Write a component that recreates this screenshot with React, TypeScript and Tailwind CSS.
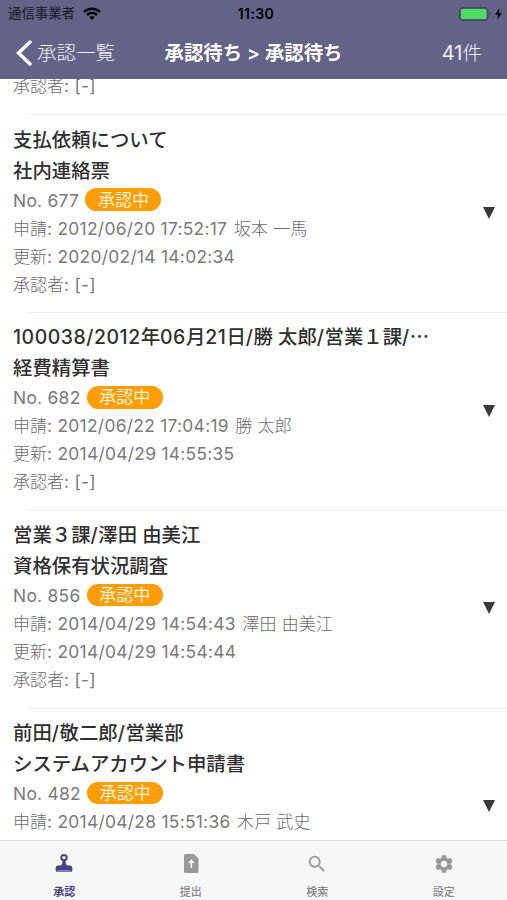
import { MdSearch, MdSettings } from "react-icons/md";

type Item = {
  title: string;
  form: string;
  no: string;
  applied: string;
  applicant: string;
  updated?: string;
};

const items: Item[] = [
  { title: "支払依頼について", form: "社内連絡票", no: "677", applied: "2012/06/20 17:52:17", applicant: "坂本 一馬", updated: "2020/02/14 14:02:34" },
  { title: "100038/2012年06月21日/勝 太郎/営業１課/⋯", form: "経費精算書", no: "682", applied: "2012/06/22 17:04:19", applicant: "勝 太郎", updated: "2014/04/29 14:55:35" },
  { title: "営業３課/澤田 由美江", form: "資格保有状況調査", no: "856", applied: "2014/04/29 14:54:43", applicant: "澤田 由美江", updated: "2014/04/29 14:54:44" },
  { title: "前田/敬二郎/営業部", form: "システムアカウント申請書", no: "482", applied: "2014/04/28 15:51:36", applicant: "木戸 武史" },
];

/* Latin letters and digits are set a little wider than the Japanese text. */
function Title({ text }: { text: string }) {
  return (
    <div className="text-[19.4px] font-medium leading-[31px] text-[#303030]">
      {text.split(/([0-9/]+)/).map((part, i) =>
        i % 2 ? <span key={i} className="tracking-[0.55px]">{part}</span> : part,
      )}
    </div>
  );
}

function Latin({ children }: { children: string }) {
  return <span className="text-[17.4px] font-normal tracking-[0.28px] text-[#7a7a7a]">{children}</span>;
}

function Approver() {
  return <div>承認者<Latin>: [-]</Latin></div>;
}

function Row({ item }: { item: Item }) {
  return (
    <div className="flex items-start pl-[13px] pt-[9.4px]">
      <div className="min-w-0 flex-1 whitespace-nowrap text-[17px] font-light leading-[28px] text-[#6c6c6c]">
        <Title text={item.title} />
        <Title text={item.form} />
        <div className="flex h-[28px] items-center">
          <Latin>{`No. ${item.no}`}</Latin>
          <span className="-mt-[2px] ml-[6.2px] flex h-[22.4px] w-[76px] items-center justify-center rounded-full bg-[#ff9d05] font-normal leading-[22px] text-[#fff3df]">承認中</span>
        </div>
        <div>申請<Latin>{`: ${item.applied} `}</Latin><span className="ml-[1.3px] tracking-[0.2px]">{item.applicant}</span></div>
        {item.updated && <div>更新<Latin>{`: ${item.updated}`}</Latin></div>}
        {item.updated && <Approver />}
      </div>
      <svg className="mr-[12px] mt-[82.3px] h-[12px] w-[12px]" viewBox="0 0 12 12">
        <path d="M0 0h12L6 12z" fill="#3a3a3a" />
      </svg>
    </div>
  );
}

export default function App() {
  return (
    <div className="flex h-[900px] w-[507px] flex-col overflow-hidden bg-white font-[Inter,'Noto_Sans_CJK_JP',sans-serif]">
      <header className="z-10 h-[79px] shrink-0 bg-[#636287]">
        <div className="grid h-[27px] grid-cols-3 items-center pl-[8px] pr-[5px] text-[13.4px] leading-[27px] text-[#17171f]">
          <div className="flex items-center gap-[8px] whitespace-nowrap">
            <span>通信事業者</span>
            <svg className="h-[13px] w-[18px]" viewBox="0 0 18 13" fill="none" stroke="#08080c" strokeWidth="2.5">
              <path d="M1 4.9C5.5.6 12.5.6 17 4.9M4 8c2.9-2.7 7.100-2.7 10 0" />
              <path d="M9 13L6.100 10.100c1.600-1.500 4.200-1.500 5.800 0z" fill="#08080c" stroke="none" />
            </svg>
          </div>
          <div className="pl-[2px] text-center text-[14px] font-semibold tracking-[0.4px] text-black">11:30</div>
          <div className="flex items-center justify-end gap-[4px]">
            <svg className="h-[14px] w-[32px]" viewBox="0 0 32 14">
              <rect x=".75" y=".75" width="28" height="12.500" rx="3" fill="none" stroke="#454563" strokeWidth="1.300" />
              <rect x="2" y="2" width="25.500" height="10" rx="1.500" fill="#4ddc62" />
              <path d="M30.300 4.800c1.500.5 1.500 3.900 0 4.400z" fill="#454563" />
            </svg>
            <svg className="h-[12px] w-[7px]" viewBox="0 0 7 12"><path d="M4.700 0L0 6.800h3L2.200 12 7 5H4z" fill="#09090d" /></svg>
          </div>
        </div>
        <div className="flex h-[52px] items-center whitespace-nowrap pl-[16px] pr-[25px] text-[19.5px] font-light leading-[52px] text-[#f1f0f7]">
          <svg className="h-[26px] w-[16px]" viewBox="0 0 16 26" fill="none" stroke="white" strokeWidth="3.400" strokeLinecap="round">
            <path d="M14 2L2.500 13L14 24" />
          </svg>
          <span className="ml-[5px] w-[127.500px]">承認一覧</span>
          <span className="text-[19.4px] font-semibold text-white">承認待ち &gt; 承認待ち</span>
          <span className="ml-auto"><span className="text-[20px] font-normal">41</span>件</span>
        </div>
      </header>
      <main className="min-h-0 flex-1 overflow-hidden">
        <div className="flex h-[35.200px] items-start pl-[13px] text-[17px] font-light leading-[28px] text-[#6c6c6c]">
          <div className="-mt-[6.600px]"><Approver /></div>
        </div>
        <ul className="flex flex-col">
          {items.map((item) => (
            <li key={item.no} className="flex h-[197.8px] shrink-0 flex-col">
              <div className="ml-[27px] h-px shrink-0 bg-[#f0f0f0]" />
              <Row item={item} />
            </li>
          ))}
        </ul>
      </main>
      <nav className="z-10 grid h-[60px] shrink-0 grid-cols-4 border-t border-[#d9d9d9] bg-[#f7f7f7] pl-px text-[11px] font-medium leading-[16px] text-[#858585]">
        <div className="flex flex-col items-center font-semibold text-[#474381]">
          <svg className="mt-[12px] h-[22px] w-[22px]" viewBox="0 0 22 22">
            <circle cx="11" cy="4.600" r="2.700" fill="none" stroke="#474381" strokeWidth="2" />
            <path d="M9.600 7h2.800c0 3 .5 4.700 2 5.500h2.600a2.400 2.400 0 0 1 2.400 2.400v.6H2.600v-.6A2.400 2.400 0 0 1 5 12.500h2.600c1.500-.8 2-2.500 2-5.500zM2.600 15h16.800v2q0 2-2 2H4.600q-2 0-2-2z" fill="#474381" />
            <path d="M4.500 18h13" stroke="#aaa8c6" strokeWidth="1.200" />
          </svg>
          <span className="mt-[8.5px]">承認</span>
        </div>
        <div className="flex flex-col items-center">
          <svg className="mt-[12px] h-[22px] w-[22px]" viewBox="0 0 22 22">
            <path d="M4 2.500q0-1.500 1.500-1.500H14l4.500 4.500v13q0 1.500-1.500 1.500H5.500Q4 20 4 18.500z" fill="#999" />
            <path d="M11.300 15V8M8.800 10l2.500-2.500L13.800 10" fill="none" stroke="#f7f7f7" strokeWidth="1.700" />
          </svg>
          <span className="mt-[8.5px]">提出</span>
        </div>
        <div className="flex flex-col items-center">
          <MdSearch className="mt-[12px] h-[22px] w-[22px] text-[#999]" />
          <span className="mt-[8.5px]">検索</span>
        </div>
        <div className="flex flex-col items-center">
          <MdSettings className="mt-[12px] h-[22px] w-[22px] text-[#999]" />
          <span className="mt-[8.5px]">設定</span>
        </div>
      </nav>
    </div>
  );
}
